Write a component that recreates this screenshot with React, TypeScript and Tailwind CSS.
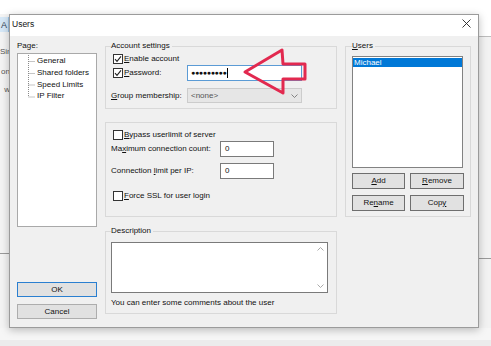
import React from 'react';

const Check: React.FC<{ checked?: boolean }> = ({ checked }) => (
  <span className="w-[10px] h-[10px] ml-[2px] border border-[#333] bg-white flex items-center justify-center shrink-0">
    {checked && (
      <svg width="8" height="8" viewBox="0 0 8 8">
        <path d="M1 4.2 L3 6.3 L7 1.4" stroke="#222" strokeWidth="1.1" fill="none" />
      </svg>
    )}
  </span>
);

const U: React.FC<{ children: React.ReactNode }> = ({ children }) => (
  <span className="underline underline-offset-1">{children}</span>
);

const Btn: React.FC<{ children: React.ReactNode; className?: string }> = ({ children, className = '' }) => (
  <div className={`h-[16px] bg-[#e1e1e1] border border-[#6e6e6e] flex items-center justify-center ${className}`}>{children}</div>
);

const App: React.FC = () => {
  return (
    <div className="w-[491px] h-[346px] relative overflow-hidden bg-white font-['Liberation_Sans',Arial,sans-serif] text-[8px] leading-[10px] text-[#111]">
      {/* window behind the dialog */}
      <div className="absolute left-0 top-[14px] w-[12px] h-[314px] bg-[#f4f4f4] flex flex-col">
        <div className="mt-[3px] w-[9px] h-[15px] bg-[#d6e8f7] border-r border-[#9cc3e6] flex items-center justify-end pr-[1px] text-[#345] text-[9px]">A</div>
        <div className="mt-[15px] text-right pr-[2px] text-[#555]">Sin</div>
        <div className="mt-[10px] text-right pr-[2px] text-[#555]">on</div>
        <div className="mt-[8px] text-right pr-[2px] text-[#555]">w</div>
        <div className="mt-[158px] h-px bg-[#9a9a9a]" />
      </div>
      <div className="absolute right-0 top-[36px] w-[14px] h-[292px] bg-[#f2f2f2] border-t border-[#bdbdbd] flex flex-col">
        <div className="mt-[221px] h-px bg-[#9a9a9a]" />
      </div>
      <div className="absolute left-0 bottom-0 w-full h-[18px] bg-[#f6f6f6] flex flex-col justify-end">
        <div className="h-[6px] bg-[#ececec]" />
      </div>

      {/* dialog */}
      <div className="absolute left-[9px] top-[14px] w-[470px] h-[314px] border border-[#9b9b9b] bg-[#f0f0f0] shadow-[0_2px_8px_rgba(0,0,0,0.25)] flex flex-col">
        <div className="h-[21px] bg-white flex items-start justify-between pl-[2px] pr-[7px] pt-[4px]">
          <span className="text-[8.5px]">Users</span>
          <svg width="9" height="9" viewBox="0 0 9 9">
            <path d="M0.5 0.5 L8.5 8.5 M8.5 0.5 L0.5 8.5" stroke="#222" strokeWidth="0.9" />
          </svg>
        </div>

        <div className="flex-1 flex pl-[7px] pt-[5px] gap-[8px]">
          {/* left column */}
          <div className="w-[80px] flex flex-col">
            <div className="h-[10px]">Page:</div>
            <div className="mt-[2px] h-[174px] bg-white border border-[#a9a9a9] pt-[1px] pl-[10px] flex">
              <svg width="8" height="48" viewBox="0 0 8 48" className="shrink-0">
                <path d="M0.5 0 V42 M0.5 6.5 H7 M0.5 18.5 H7 M0.5 30 H7 M0.5 42 H7" stroke="#8a8a8a" strokeWidth="1" strokeDasharray="1 1" fill="none" />
              </svg>
              <div className="flex flex-col pl-[1px] pt-[1px]">
                <div className="h-[12px]">General</div>
                <div className="h-[12px]">Shared folders</div>
                <div className="h-[11px]">Speed Limits</div>
                <div className="h-[12px]">IP Filter</div>
              </div>
            </div>
            <div className="mt-[55px] h-[15px] bg-[#e1e1e1] border border-[#2a7fd0] flex items-center justify-center">OK</div>
            <div className="mt-[7px] h-[15px] bg-[#e1e1e1] border border-[#adadad] flex items-center justify-center">Cancel</div>
          </div>

          {/* middle column */}
          <div className="w-[232px] flex flex-col">
            <fieldset className="border border-[#d9d9d9] pl-[5px] pt-[2px] pb-[5px]">
              <legend className="pr-[2px] leading-[10px]">Account settings</legend>
              <div className="h-[12px] flex items-center gap-[1px]">
                <Check checked />
                <span><U>E</U>nable account</span>
              </div>
              <div className="h-[16px] flex items-center">
                <div className="w-[76px] flex items-center gap-[1px]">
                  <Check checked />
                  <span><U>P</U>assword:</span>
                </div>
                <div className="w-[115px] h-[16px] bg-white border border-[#5b9bd5] flex items-center pl-[3px] text-[7px] tracking-[-0.3px]">
                  ●●●●●●●●●<span className="ml-[1px] w-px h-[10px] bg-black" />
                </div>
              </div>
              <div className="mt-[7px] h-[15px] flex items-center">
                <div className="w-[76px]"><U>G</U>roup membership:</div>
                <div className="w-[115px] h-[15px] bg-[#e6e6e6] border border-[#cccccc] flex items-center justify-between pl-[3px] pr-[3px] text-[#555]">
                  <span>&lt;none&gt;</span>
                  <svg width="7" height="4" viewBox="0 0 7 4">
                    <path d="M0.5 0.5 L3.5 3.5 L6.5 0.5" stroke="#777" strokeWidth="0.9" fill="none" />
                  </svg>
                </div>
              </div>
            </fieldset>

            <div className="mt-[13px] border border-[#d9d9d9] pl-[5px] pt-[6px] pb-[14px]">
              <div className="h-[12px] flex items-center gap-[1px]">
                <Check />
                <span><U>B</U>ypass userlimit of server</span>
              </div>
              <div className="h-[16px] flex items-center">
                <div className="w-[109px]">Ma<U>x</U>imum connection count:</div>
                <div className="w-[54px] h-[16px] bg-white border border-[#7a7a7a] flex items-center pl-[4px]">0</div>
              </div>
              <div className="mt-[6px] h-[16px] flex items-center">
                <div className="w-[109px]">Connection <U>l</U>imit per IP:</div>
                <div className="w-[54px] h-[16px] bg-white border border-[#7a7a7a] flex items-center pl-[4px]">0</div>
              </div>
              <div className="mt-[11px] h-[12px] flex items-center gap-[1px]">
                <Check />
                <span><U>F</U>orce SSL for user login</span>
              </div>
            </div>

            <fieldset className="mt-[9px] border border-[#d9d9d9] pl-[5px] pt-[6px] pb-[5px]">
              <legend className="pr-[2px] leading-[10px]">Description</legend>
              <div className="w-[217px] h-[51px] bg-white border border-[#7a7a7a] flex justify-end">
                <div className="w-[14px] flex flex-col items-center justify-between py-[4px]">
                  <svg width="7" height="4" viewBox="0 0 7 4">
                    <path d="M0.5 3.5 L3.5 0.5 L6.5 3.5" stroke="#a0a0a0" strokeWidth="0.9" fill="none" />
                  </svg>
                  <svg width="7" height="4" viewBox="0 0 7 4">
                    <path d="M0.5 0.5 L3.5 3.5 L6.5 0.5" stroke="#a0a0a0" strokeWidth="0.9" fill="none" />
                  </svg>
                </div>
              </div>
              <div className="mt-[5px] h-[10px]">You can enter some comments about the user</div>
            </fieldset>
          </div>

          {/* right column */}
          <div className="w-[126px] flex flex-col">
            <fieldset className="border border-[#d9d9d9] pl-[6px] pt-[5px] pb-[5px]">
              <legend className="pr-[2px] leading-[10px]"><U>U</U>sers</legend>
              <div className="w-[111px] h-[112px] bg-white border border-[#828282] pt-[1px]">
                <div className="h-[9px] leading-[9px] bg-[#0078d7] text-white pl-[1px]">Michael</div>
              </div>
              <div className="mt-[5px] flex gap-[5px]">
                <Btn className="w-[53px]"><U>A</U>dd</Btn>
                <Btn className="w-[54px]"><U>R</U>emove</Btn>
              </div>
              <div className="mt-[6px] flex gap-[5px]">
                <Btn className="w-[53px]">Re<U>n</U>ame</Btn>
                <Btn className="w-[54px]">Cop<U>y</U></Btn>
              </div>
            </fieldset>
          </div>
        </div>
      </div>

      {/* red annotation arrow */}
      <svg className="absolute left-[240px] top-[45px]" width="70" height="55" viewBox="0 0 70 55">
        <path d="M5 27 L42 5 L43 19 L65 19 L65 34 L43 34 L43 48 Z" stroke="#e2294f" strokeWidth="3" strokeLinejoin="round" fill="none" />
      </svg>
    </div>
  );
};

export default App;
